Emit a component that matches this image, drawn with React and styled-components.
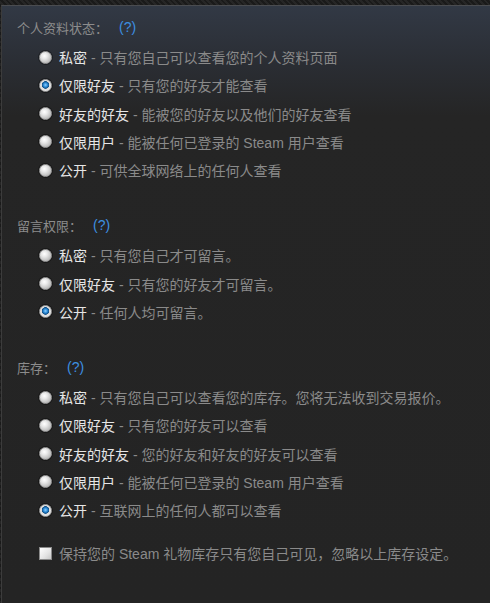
import React from 'react';
import styled, { createGlobalStyle } from 'styled-components';

const GlobalStyle = createGlobalStyle`
  html, body {
    margin: 0;
    padding: 0;
    height: 100%;
  }
  body {
    background-color: #1c1c1c;
    background-image: repeating-linear-gradient(45deg, #262626 0 2px, #1a1a1a 2px 4px);
    font-family: "Liberation Sans", Arial, "Noto Sans CJK SC", sans-serif;
    font-weight: 400;
  }
  #root {
    height: 100%;
  }
`;

const Panel = styled.div`
  box-sizing: border-box;
  margin: 5px 0 0 1px;
  height: calc(100% - 5px);
  border-top: 1px solid #4a4c50;
  border-left: 1px solid #3c3c3c;
  background: linear-gradient(to bottom, #323945 0px, #2a2d33 60px, #252525 110px, #242424 100%);
  padding: 12px 0 0 15px;
  display: flex;
  flex-direction: column;
  gap: 32px;
`;

const Section = styled.div`
  display: flex;
  flex-direction: column;
`;

const Title = styled.div`
  display: flex;
  align-items: center;
  height: 18px;
  font-size: 13px;
  color: #8c8c8c;
  margin-bottom: 7px;
`;

const Help = styled.span`
  color: #3d8fe0;
  font-size: 14px;
  margin-left: 11px;
`;

const List = styled.div`
  display: flex;
  flex-direction: column;
  padding-left: 22px;
`;

const Row = styled.label`
  display: flex;
  align-items: center;
  height: 28.25px;
  font-size: 14px;
  gap: 7px;
`;

const Radio = styled.span`
  box-sizing: border-box;
  width: 13px;
  height: 13px;
  border-radius: 50%;
  flex: none;
  border: 1px solid #9a9a9a;
  background: ${p =>
    p.$checked
      ? 'radial-gradient(circle at 50% 45%, #8fd0ff 0, #2a8ad6 2px, #0f4e86 3.5px, #dcdcdc 4px, #f2f2f2 100%)'
      : 'radial-gradient(circle at 40% 35%, #ffffff 0, #e8e8e8 3px, #bdbdbd 7px)'};
  box-shadow: 0 0 0 1px rgba(0, 0, 0, 0.35);
`;

const Check = styled.span`
  box-sizing: border-box;
  width: 13px;
  height: 13px;
  flex: none;
  border: 1px solid #8a8a8a;
  background: linear-gradient(135deg, #ffffff 0%, #e4e4e4 60%, #c8c8c8 100%);
`;

const Name = styled.span`
  color: #e6e6e6;
`;

const Desc = styled.span`
  color: #8a8a8a;
`;

const CheckRow = styled(Row)`
  margin-top: 15px;
  padding-left: 22px;
  color: #8a8a8a;
`;

const sections = [
  {
    title: '个人资料状态：',
    checked: 1,
    items: [
      ['私密', '只有您自己可以查看您的个人资料页面'],
      ['仅限好友', '只有您的好友才能查看'],
      ['好友的好友', '能被您的好友以及他们的好友查看'],
      ['仅限用户', '能被任何已登录的 Steam 用户查看'],
      ['公开', '可供全球网络上的任何人查看'],
    ],
  },
  {
    title: '留言权限：',
    checked: 2,
    items: [
      ['私密', '只有您自己才可留言。'],
      ['仅限好友', '只有您的好友才可留言。'],
      ['公开', '任何人均可留言。'],
    ],
  },
  {
    title: '库存：',
    checked: 4,
    items: [
      ['私密', '只有您自己可以查看您的库存。您将无法收到交易报价。'],
      ['仅限好友', '只有您的好友可以查看'],
      ['好友的好友', '您的好友和好友的好友可以查看'],
      ['仅限用户', '能被任何已登录的 Steam 用户查看'],
      ['公开', '互联网上的任何人都可以查看'],
    ],
  },
];

const App = () => {
  return (
    <>
      <GlobalStyle />
      <Panel>
        {sections.map((s, si) => (
          <Section key={si}>
            <Title>
              {s.title}
              <Help>(?)</Help>
            </Title>
            <List>
              {s.items.map(([name, desc], i) => (
                <Row key={i}>
                  <Radio $checked={i === s.checked} />
                  <span>
                    <Name>{name}</Name>
                    <Desc> - {desc}</Desc>
                  </span>
                </Row>
              ))}
            </List>
            {si === 2 && (
              <CheckRow>
                <Check />
                <span>保持您的 Steam 礼物库存只有您自己可见，忽略以上库存设定。</span>
              </CheckRow>
            )}
          </Section>
        ))}
      </Panel>
    </>
  );
};

export default App;
